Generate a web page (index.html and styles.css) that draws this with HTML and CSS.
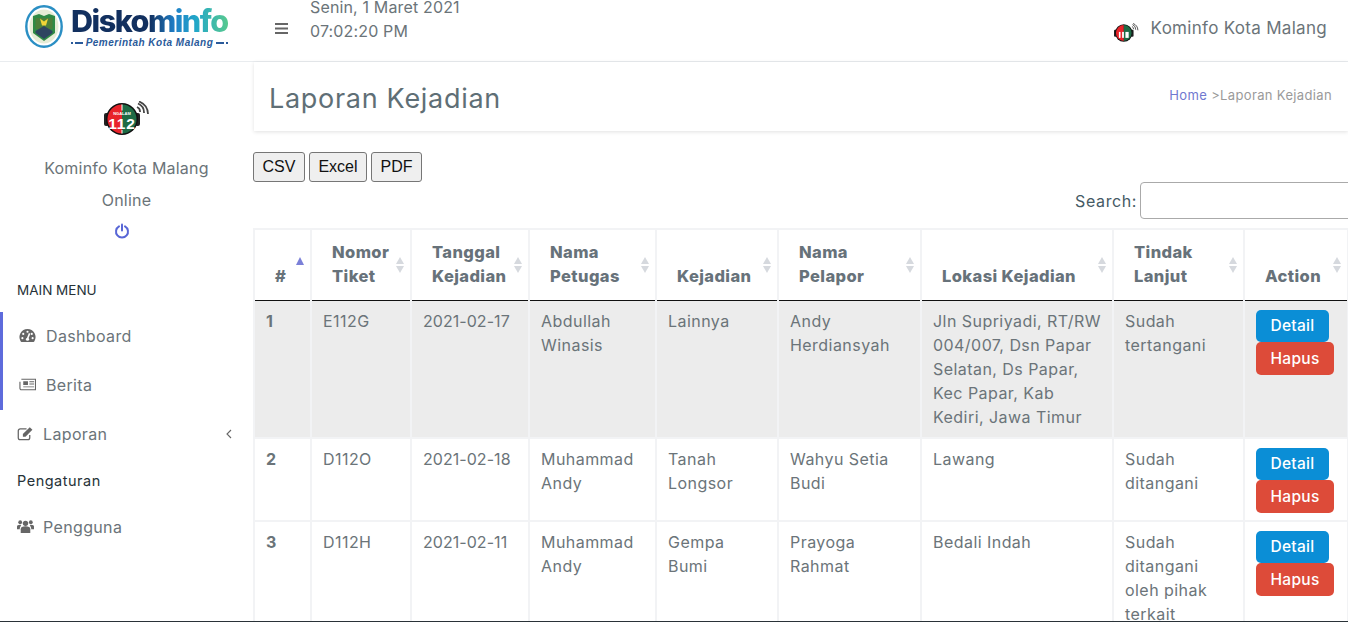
FILE: index.html
```html
<!DOCTYPE html>
<html lang="id">
<head>
<meta charset="utf-8">
<title>Laporan Kejadian</title>
<link rel="stylesheet" href="styles.css">
</head>
<body>
<header class="topbar">
  <div class="brand">
    <svg class="crest" viewBox="0 0 38 43" aria-hidden="true">
      <ellipse cx="19" cy="21.500" rx="17.700" ry="20.200" fill="#fff" stroke="#2b8fc4" stroke-width="2.400"/>
      <ellipse cx="19" cy="21.500" rx="14.500" ry="17" fill="#e6ecd6"/>
      <path d="M8 11l6-2 5 2 5-2 6 2v17L19 36 8 28z" fill="#2f8a45"/>
      <path d="M10.500 13h17v11h-17z" fill="#4d7f3a"/>
      <path d="M15 13.500l2 7h4l2-7-4 3z" fill="#f1d437"/>
      <path d="M10.500 26l8.500-5 8.500 5v2L19 34l-8.500-6z" fill="#2e4560"/>
    </svg>
    <div class="wordmark">
      <div class="wordmark-name">Diskominfo</div>
      <div class="wordmark-sub"><i class="dot"></i><i class="dash"></i><span>Pemerintah Kota Malang</span><i class="dash"></i><i class="dot"></i></div>
    </div>
  </div>
  <svg class="burger" viewBox="0 0 13 11" aria-hidden="true"><path d="M0 0h13v2H0zM0 4.500h13v2H0zM0 9h13v2H0z" fill="#666"/></svg>
  <div class="clock"><div class="clock-date">Senin, 1 Maret 2021</div><div>07:02:20 PM</div></div>
  <div class="user">
    <svg class="user-logo" viewBox="0 0 46 36" aria-hidden="true">
      <rect x="0" y="12" width="5" height="13" rx="2" fill="#222"/>
      <rect x="31" y="12" width="5" height="13" rx="2" fill="#222"/>
      <circle cx="18" cy="18" r="16" fill="#111"/>
      <path d="M18 3.500a14.500 14.500 0 0 0 0 29z" fill="#e8232a"/>
      <path d="M18 3.500a14.500 14.500 0 0 1 0 29z" fill="#1e6b45"/>
      <rect x="16" y="16" width="1.500" height="10" fill="#fff"/>
      <rect x="9" y="16" width="3" height="11" fill="#fff"/>
      <rect x="15" y="16" width="3" height="11" fill="#fff"/>
      <rect x="21" y="16" width="6" height="11" fill="#fff"/>
      <path d="M36 11a5 5 0 0 0-3-5M40 12a10 10 0 0 0-6-9.500M44 13A14 14 0 0 0 35 .500" fill="none" stroke="#555" stroke-width="1.800"/>
    </svg>
    <span>Kominfo Kota Malang</span>
  </div>
</header>

<div class="layout">
  <aside class="sidebar">
    <div class="profile">
      <svg class="profile-logo" viewBox="0 0 46 36" role="img" aria-label="Ngalam 112">
        <rect x="0" y="12" width="5" height="13" rx="2" fill="#222"/>
        <rect x="31" y="12" width="5" height="13" rx="2" fill="#222"/>
        <circle cx="18" cy="18" r="16" fill="#111"/>
        <path d="M18 3.500a14.500 14.500 0 0 0 0 29z" fill="#e8232a"/>
        <path d="M18 3.500a14.500 14.500 0 0 1 0 29z" fill="#1e6b45"/>
        <rect x="17.500" y="3.500" width="1" height="6" fill="#fff"/>
        <rect x="17.500" y="29" width="1" height="3.500" fill="#fff"/>
        <text class="logo-small" x="18" y="14" text-anchor="middle">NGALAM</text>
        <text class="logo-big" x="18" y="27.500" text-anchor="middle">112</text>
        <path d="M36 11a5 5 0 0 0-3-5M40 12a10 10 0 0 0-6-9.500M44 13A14 14 0 0 0 35 .500" fill="none" stroke="#444" stroke-width="1.800"/>
      </svg>
      <div class="profile-name">Kominfo Kota Malang</div>
      <div class="profile-status">Online</div>
      <svg class="power" viewBox="0 0 16 16" aria-hidden="true"><path d="M5 3.400a6 6 0 1 0 6 0" fill="none" stroke="#5866d6" stroke-width="2" stroke-linecap="round"/><path d="M8 1.500v6" stroke="#5866d6" stroke-width="2" stroke-linecap="round"/></svg>
    </div>
    <div class="menu-title menu-title-main">MAIN MENU</div>
    <div class="menu-active">
      <a class="menu-item">
        <svg class="ico" viewBox="0 0 16 14" aria-hidden="true"><path d="M8 1a7.500 7.500 0 0 0-6.500 11.300l.7.700h11.600l.7-.7A7.500 7.500 0 0 0 8 1z" fill="#666"/><circle cx="8" cy="3.500" r="1" fill="#fff"/><circle cx="4" cy="5.500" r="1" fill="#fff"/><circle cx="12" cy="5.500" r="1" fill="#fff"/><circle cx="3.200" cy="9.500" r="1" fill="#fff"/><circle cx="12.800" cy="9.500" r="1" fill="#fff"/><path d="M8 10l2-5" stroke="#fff" stroke-width="1.500"/><circle cx="8" cy="10.500" r="1.500" fill="#fff"/></svg>
        <span>Dashboard</span>
      </a>
      <a class="menu-item">
        <svg class="ico" viewBox="0 0 18 14" aria-hidden="true"><path d="M2.500 1.500h15v11h-15a1.500 1.500 0 0 1-1.500-1.500V4" fill="none" stroke="#666" stroke-width="1.200"/><path d="M4.500 3.500h5v4h-5zM11 3.500h5v1h-5zM11 6h5v1h-5zM4.500 9h11.500v1H4.500z" fill="#666"/></svg>
        <span>Berita</span>
      </a>
    </div>
    <a class="menu-item menu-plain">
      <svg class="ico ico-tight" viewBox="0 0 16 14" aria-hidden="true"><path d="M12 8.500V11a1.800 1.800 0 0 1-1.800 1.800H3A1.800 1.800 0 0 1 1.200 11V4.500A1.800 1.800 0 0 1 3 2.700h6" fill="none" stroke="#666" stroke-width="1.200"/><path d="M5.500 7.500L12 1l2.500 2.500L8 10H5.500z" fill="#666"/></svg>
      <span>Laporan</span>
      <svg class="chev" viewBox="0 0 6 10" aria-hidden="true"><path d="M5 1L1 5l4 4" fill="none" stroke="#666" stroke-width="1.100"/></svg>
    </a>
    <div class="menu-title menu-title-sub">Pengaturan</div>
    <a class="menu-item menu-plain">
      <svg class="ico ico-tight" viewBox="0 0 16 14" aria-hidden="true"><circle cx="8" cy="4" r="2.500" fill="#666"/><circle cx="3" cy="3" r="1.800" fill="#666"/><circle cx="13" cy="3" r="1.800" fill="#666"/><path d="M3.500 13V9.500c0-2 1.500-2.800 4.500-2.800s4.500.8 4.500 2.800V13z" fill="#666"/><path d="M0 9.500V7c0-1 1-1.700 3-1.700l1 .7C3 7 2.600 8 2.600 9.500zM16 9.500V7c0-1-1-1.700-3-1.700l-1 .7c1 1 1.400 2 1.400 3.500z" fill="#666"/></svg>
      <span>Pengguna</span>
    </a>
  </aside>

  <main class="content">
    <div class="page-head">
      <h1>Laporan Kejadian</h1>
      <div class="crumbs"><a>Home</a> &gt;Laporan Kejadian</div>
    </div>
    <div class="tools">
      <button class="tool-btn">CSV</button>
      <button class="tool-btn">Excel</button>
      <button class="tool-btn">PDF</button>
    </div>
    <div class="search"><label for="q">Search:</label><input id="q" type="text"></div>
    <table class="grid">
      <colgroup>
        <col class="c1"><col class="c2"><col class="c3"><col class="c4"><col class="c5"><col class="c6"><col class="c7"><col class="c8"><col class="c9">
      </colgroup>
      <thead>
        <tr>
          <th class="sorted">#</th>
          <th>Nomor<br>Tiket</th>
          <th>Tanggal<br>Kejadian</th>
          <th>Nama<br>Petugas</th>
          <th>Kejadian</th>
          <th>Nama<br>Pelapor</th>
          <th>Lokasi Kejadian</th>
          <th>Tindak<br>Lanjut</th>
          <th>Action</th>
        </tr>
      </thead>
      <tbody>
        <tr class="odd">
          <td class="num">1</td><td>E112G</td><td class="date">2021-02-17</td><td>Abdullah<br>Winasis</td><td>Lainnya</td><td>Andy<br>Herdiansyah</td>
          <td>Jln Supriyadi, RT/RW<br>004/007, Dsn Papar<br>Selatan, Ds Papar,<br>Kec Papar, Kab<br>Kediri, Jawa Timur</td>
          <td>Sudah<br>tertangani</td>
          <td class="act"><a class="btn btn-detail">Detail</a><a class="btn btn-hapus">Hapus</a></td>
        </tr>
        <tr>
          <td class="num">2</td><td>D112O</td><td class="date">2021-02-18</td><td>Muhammad<br>Andy</td><td>Tanah<br>Longsor</td><td>Wahyu Setia<br>Budi</td><td>Lawang</td>
          <td>Sudah<br>ditangani</td>
          <td class="act"><a class="btn btn-detail">Detail</a><a class="btn btn-hapus">Hapus</a></td>
        </tr>
        <tr>
          <td class="num">3</td><td>D112H</td><td class="date">2021-02-11</td><td>Muhammad<br>Andy</td><td>Gempa<br>Bumi</td><td>Prayoga<br>Rahmat</td><td>Bedali Indah</td>
          <td>Sudah<br>ditangani<br>oleh pihak<br>terkait</td>
          <td class="act"><a class="btn btn-detail">Detail</a><a class="btn btn-hapus">Hapus</a></td>
        </tr>
      </tbody>
    </table>
  </main>
</div>
<div class="edge-line"></div>
</body>
</html>
```
FILE: styles.css
```css
* { box-sizing: border-box; }
html, body { margin: 0; padding: 0; height: 622px; overflow: hidden; background: #fff; }
body { font-family: "Inter", "Open Sans", sans-serif; color: #6b7479; font-size: 16px; }
.logo-small { font-family: "Liberation Sans", sans-serif; font-weight: 700; font-size: 4px; fill: #fff; }
.logo-big { font-family: "Liberation Sans", sans-serif; font-weight: 700; font-size: 15.500px; letter-spacing: .8px; fill: #fff; }
.edge-line { position: fixed; left: 0; right: 0; bottom: 0; height: 1px; background: #2a3238; }

.topbar { display: flex; align-items: center; height: 62px; border-bottom: 1px solid #e9ecef; background: #fff; }
.brand { display: flex; align-items: center; width: 275px; padding-left: 25px; flex: none; }
.crest { width: 38px; height: 43px; flex: none; margin-top: -8px; }
.wordmark { margin-left: 8px; margin-top: -8px; width: 157px; }
.wordmark-name { font-weight: 800; font-size: 30.500px; line-height: 32px; letter-spacing: -1.500px; white-space: nowrap;
  background: linear-gradient(90deg, #12305f 0, #12305f 50%, #1f7fc8 66%, #22a8c8 80%, #58c98f 100%);
  -webkit-background-clip: text; background-clip: text; color: transparent; }
.wordmark-sub { display: flex; align-items: center; justify-content: space-between; font-family: "Liberation Sans", sans-serif; font-weight: 700; font-style: italic; font-size: 10px; letter-spacing: .5px; line-height: 11px; color: #2a5a9a; white-space: nowrap; }
.dash { display: block; width: 8px; height: 2px; background: #2a5a9a; }
.dot { display: block; width: 2px; height: 2px; background: #2a5a9a; }
.burger { width: 13px; height: 11px; flex: none; margin-bottom: 5px; }
.clock { align-self: flex-start; margin-left: 22px; font-size: 16px; letter-spacing: .15px; line-height: 24px; color: #6b7479; }
.clock-date { line-height: 14px; margin-bottom: 5px; }
.user { margin-left: auto; margin-right: 21px; margin-bottom: 6px; display: flex; align-items: center; gap: 12px; font-size: 17px; letter-spacing: .3px; color: #6b7479; }
.user-logo { width: 25px; height: 20px; margin-top: 10px; }

.layout { display: flex; height: 560px; }
.sidebar { width: 253px; flex: none; padding-top: 39px; }
.profile { display: flex; flex-direction: column; align-items: center; }
.profile-logo { width: 46px; height: 36px; }
.profile-name { margin-top: 15px; line-height: 32px; font-size: 16px; letter-spacing: .2px; }
.profile-status { line-height: 32px; font-size: 16px; letter-spacing: .2px; }
.power { width: 16px; height: 16px; margin-top: 7px; margin-right: 9px; }
.menu-title { color: #263238; font-size: 13.500px; padding-left: 17px; line-height: 20px; }
.menu-title-main { margin-top: 41px; }
.menu-title-sub { margin-top: 12px; margin-bottom: 12px; font-size: 14.500px; letter-spacing: .5px; }
.menu-active { border-left: 3px solid #5e6bdc; margin-top: 12px; }
.menu-item { display: flex; align-items: center; height: 49px; padding-bottom: 2px; font-size: 16px; letter-spacing: .35px; color: #6b7479; padding-left: 16px; }
.menu-plain { padding-left: 17px; padding-right: 21px; }
.ico { width: 17px; height: 15px; margin-right: 10px; flex: none; }
.ico-tight { margin-right: 9px; }
.chev { width: 6px; height: 10px; margin-left: auto; }

.content { flex: 1; min-width: 0; }
.page-head { display: flex; align-items: center; justify-content: space-between; height: 69px; padding: 0 16px; margin-left: 1px; box-shadow: 0 1px 4px rgba(0,0,0,.12); }
.page-head h1 { margin: 4px 0 0 -1px; font-weight: 400; font-size: 27px; letter-spacing: .7px; color: #5f6f76; }
.crumbs { font-size: 13px; letter-spacing: .35px; color: #9a9a9a; margin-bottom: 4px; }
.crumbs a { color: #7078d0; }
.tools { display: flex; gap: 4px; margin-top: 21px; height: 30px; }
.tool-btn { width: 52px; height: 30px; font-family: "Liberation Sans", sans-serif; font-size: 16px; color: #111; background: #efefef; border: 1px solid #767676; border-radius: 3px; padding: 0; }
.tool-btn:nth-child(2) { width: 58px; }
.tool-btn:nth-child(3) { width: 51px; }
.search { display: flex; justify-content: flex-end; align-items: center; gap: 3px; height: 37px; font-size: 16px; letter-spacing: .6px; color: #455a64; margin-right: -40px; }
.search input { width: 248px; height: 37px; border: 1px solid #aaa; border-radius: 4px; background: #fff; }

.grid { border-collapse: collapse; table-layout: fixed; width: 1094px; margin-top: 9px; }
.c1 { width: 57px; } .c2 { width: 100px; } .c3 { width: 118px; } .c4 { width: 127px; } .c5 { width: 122px; }
.c6 { width: 143px; } .c7 { width: 192px; } .c8 { width: 131px; } .c9 { width: 104px; }
.grid th, .grid td { border: 2px solid #f2f3f5; }
.grid th { position: relative; font-size: 16.500px; letter-spacing: .4px; font-weight: 800; line-height: 24px; color: #67727a; text-align: left; vertical-align: bottom; padding: 10px 18px 12px 20px; border-bottom: 1px solid #111; white-space: nowrap; }
.grid th::before, .grid th::after { content: ""; position: absolute; right: 6px; width: 0; height: 0; border-left: 4.500px solid transparent; border-right: 4.500px solid transparent; }
.grid th::before { top: 27px; border-bottom: 7px solid #d6d9de; }
.grid th::after { top: 36px; border-top: 7px solid #d6d9de; }
.grid th.sorted::before { border-bottom: 8px solid #7b80d8; }
.grid th.sorted::after { display: none; }
.grid td { font-size: 16px; letter-spacing: .45px; line-height: 24px; vertical-align: top; padding: 8px 10px 8px 11px; color: #6b7479; white-space: nowrap; }
.grid tbody tr:first-child td { border-top: 0; padding-top: 8px; }
.grid td.date { letter-spacing: .05px; }
.grid td.num { font-weight: 700; }
.grid td.act { padding-bottom: 7px; }
.odd td { background: #ececec; }
.btn { display: block; height: 32px; line-height: 32px; text-align: center; font-size: 15.500px; font-weight: 500; letter-spacing: .3px; color: #fff; border-radius: 5px; }
.btn-detail { width: 73px; margin-top: 1px; background: #0b8ed6; }
.btn-hapus { width: 78px; height: 33px; line-height: 33px; background: #dd4b39; }
```
